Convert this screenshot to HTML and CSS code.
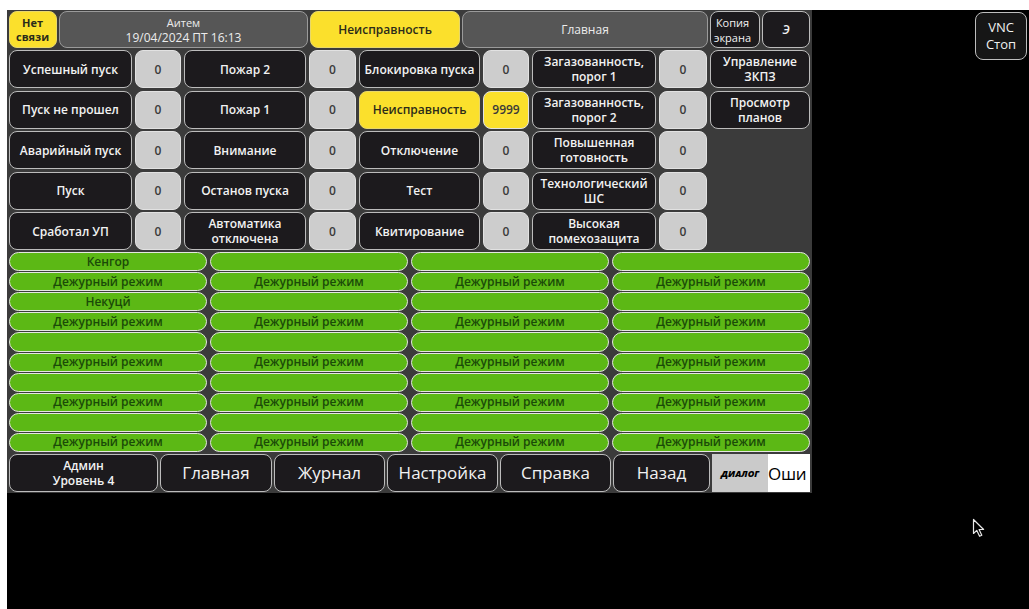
FILE: index.html
```html
<!DOCTYPE html>
<html lang="ru">
<head>
<meta charset="UTF-8">
<title>Панель</title>
<link rel="stylesheet" href="styles.css">
</head>
<body>
<div class="screen">
  <div class="panel">
    <!-- top status row -->
    <div class="toprow">
      <div class="cell yellow nolink">Нет<br>связи</div>
      <div class="cell gray title"><span class="small">Аитем</span><span>19/04/2024 ПТ 16:13</span></div>
      <div class="cell yellow">Неисправность</div>
      <div class="cell gray">Главная</div>
      <div class="cell dark copy">Копия<br>экрана</div>
      <div class="cell dark ital">Э</div>
    </div>

    <!-- counters -->
    <div class="grid">
      <div class="cell dark">Успешный пуск</div><div class="cell val">0</div>
      <div class="cell dark">Пожар 2</div><div class="cell val">0</div>
      <div class="cell dark">Блокировка пуска</div><div class="cell val">0</div>
      <div class="cell dark two">Загазованность,<br>порог 1</div><div class="cell val">0</div>
      <div class="cell dark two">Управление<br>ЗКПЗ</div>

      <div class="cell dark">Пуск не прошел</div><div class="cell val">0</div>
      <div class="cell dark">Пожар 1</div><div class="cell val">0</div>
      <div class="cell yellow">Неисправность</div><div class="cell val alarm">9999</div>
      <div class="cell dark two">Загазованность,<br>порог 2</div><div class="cell val">0</div>
      <div class="cell dark two">Просмотр<br>планов</div>

      <div class="cell dark">Аварийный пуск</div><div class="cell val">0</div>
      <div class="cell dark">Внимание</div><div class="cell val">0</div>
      <div class="cell dark">Отключение</div><div class="cell val">0</div>
      <div class="cell dark two">Повышенная<br>готовность</div><div class="cell val">0</div>
      <div class="blank"></div>

      <div class="cell dark">Пуск</div><div class="cell val">0</div>
      <div class="cell dark">Останов пуска</div><div class="cell val">0</div>
      <div class="cell dark">Тест</div><div class="cell val">0</div>
      <div class="cell dark two">Технологический<br>ШС</div><div class="cell val">0</div>
      <div class="blank"></div>

      <div class="cell dark">Сработал УП</div><div class="cell val">0</div>
      <div class="cell dark two">Автоматика<br>отключена</div><div class="cell val">0</div>
      <div class="cell dark">Квитирование</div><div class="cell val">0</div>
      <div class="cell dark two">Высокая<br>помехозащита</div><div class="cell val">0</div>
      <div class="blank"></div>
    </div>

    <!-- zones -->
    <div class="zones">
      <div class="pill">Кенгор</div><div class="pill"></div><div class="pill"></div><div class="pill"></div>
      <div class="pill">Дежурный режим</div><div class="pill">Дежурный режим</div><div class="pill">Дежурный режим</div><div class="pill">Дежурный режим</div>
      <div class="pill">Некуцй</div><div class="pill"></div><div class="pill"></div><div class="pill"></div>
      <div class="pill">Дежурный режим</div><div class="pill">Дежурный режим</div><div class="pill">Дежурный режим</div><div class="pill">Дежурный режим</div>
      <div class="pill"></div><div class="pill"></div><div class="pill"></div><div class="pill"></div>
      <div class="pill">Дежурный режим</div><div class="pill">Дежурный режим</div><div class="pill">Дежурный режим</div><div class="pill">Дежурный режим</div>
      <div class="pill"></div><div class="pill"></div><div class="pill"></div><div class="pill"></div>
      <div class="pill">Дежурный режим</div><div class="pill">Дежурный режим</div><div class="pill">Дежурный режим</div><div class="pill">Дежурный режим</div>
      <div class="pill"></div><div class="pill"></div><div class="pill"></div><div class="pill"></div>
      <div class="pill">Дежурный режим</div><div class="pill">Дежурный режим</div><div class="pill">Дежурный режим</div><div class="pill">Дежурный режим</div>
    </div>

    <!-- bottom navigation -->
    <div class="nav">
      <div class="cell dark two">Админ<br>Уровень 4</div>
      <div class="cell dark big">Главная</div>
      <div class="cell dark big">Журнал</div>
      <div class="cell dark big">Настройка</div>
      <div class="cell dark big">Справка</div>
      <div class="cell dark big">Назад</div>
      <div class="dialog"><span class="dlg-label">ДИАЛОГ</span><span class="dlg-text">Оши</span></div>
    </div>
  </div>

  <div class="vnc">VNC<br>Стоп</div>

  <svg class="cursor" width="14" height="20" viewBox="0 0 14 20">
    <path d="M1.5 1.5 L1.5 15.5 L4.8 12.4 L7.6 18.3 L9.8 17.3 L7.1 11.5 L11.6 11.5 Z" fill="#000" stroke="#e8e8e8" stroke-width="1.2" stroke-linejoin="round"/>
  </svg>
</div>
</body>
</html>
```

FILE: styles.css
```css
html {
    background-color: #ffffff;
}
body {
    margin: 0;
    font-family: "Open Sans", "Noto Sans", sans-serif;
}
.screen {
    position: relative;
    display: flex;
    align-items: flex-start;
    margin: 10px 0 0 7px;
    height: 599px;
    background-color: #000000;
}
.panel {
    width: 805px;
    height: 483px;
    box-sizing: border-box;
    padding: 1px 2px;
    display: flex;
    flex-direction: column;
    gap: 2px;
    background-color: #3b3b3b;
}
.cell {
    box-sizing: border-box;
    display: flex;
    flex-direction: column;
    align-items: center;
    justify-content: center;
    text-align: center;
    border-radius: 8px;
    font-size: 12px;
    line-height: 15px;
    font-weight: 600;
    overflow: hidden;
}
.dark {
    background-color: #1c1a1d;
    color: #f2f2f2;
    border: 1.5px solid #bcbcbc;
}
.gray {
    background-color: #565656;
    color: #ececec;
    border: 1.5px solid #9a9a9a;
    font-weight: 500;
}
.yellow {
    background-color: #fbe02c;
    color: #2b2b1a;
    border: 1.5px solid #e8d86a;
}
.val {
    background-color: #cdcdcd;
    color: #3a3a3a;
    border: 1.5px solid #e2e2e2;
}
.val.alarm {
    background-color: #fbe02c;
}
.toprow {
    display: grid;
    grid-template-columns: 48px 249px 150px 246px 50px 48px;
    gap: 2px;
    height: 37px;
}
.nolink {
    align-items: flex-start;
    padding-left: 6px;
    font-size: 11px;
    line-height: 14px;
    font-weight: 700;
}
.title .small {
    font-size: 11px;
}
.copy {
    align-items: flex-start;
    padding-left: 3px;
    font-size: 11px;
    font-weight: 500;
}
.ital {
    font-style: italic;
}
.grid {
    display: grid;
    grid-template-columns: 123px 46px 122px 47px 121px 46px 124px 48px 1fr;
    grid-template-rows: repeat(5, 1fr);
    gap: 2.5px 3px;
    height: 200px;
}
.blank {
    background-color: #3b3b3b;
}
.zones {
    display: grid;
    grid-template-columns: repeat(4, 1fr);
    grid-template-rows: repeat(10, 1fr);
    gap: 1px 3px;
    height: 200px;
}
.pill {
    box-sizing: border-box;
    display: flex;
    align-items: center;
    justify-content: center;
    background-color: #5cb815;
    border: 1.5px solid #e4e8df;
    border-radius: 10px;
    color: #1a4a08;
    font-size: 12px;
    font-weight: 600;
    line-height: 14px;
}
.nav {
    display: grid;
    grid-template-columns: 149px 112px 111px 111px 111px 97px 1fr;
    gap: 2px;
    height: 38px;
}
.big {
    font-size: 17px;
    font-weight: 500;
    line-height: 20px;
}
.dialog {
    display: flex;
    align-items: stretch;
    overflow: hidden;
    background-color: #ffffff;
}
.dlg-label {
    width: 56px;
    flex-shrink: 0;
    display: flex;
    align-items: center;
    justify-content: center;
    background-color: #cacaca;
    color: #000000;
    font-size: 9px;
    font-weight: 800;
    font-style: italic;
}
.dlg-text {
    display: flex;
    align-items: center;
    color: #000000;
    font-size: 17px;
    letter-spacing: -0.3px;
    white-space: nowrap;
}
.vnc {
    margin: 2px 2px 0 auto;
    width: 52px;
    height: 48px;
    box-sizing: border-box;
    display: flex;
    align-items: center;
    justify-content: center;
    text-align: center;
    border: 1.5px solid #bdbdbd;
    border-radius: 8px;
    background-color: #161616;
    color: #f0f0f0;
    font-size: 13px;
    line-height: 17px;
    font-weight: 500;
}
.cursor {
    position: absolute;
    left: 965px;
    top: 508px;
}
```
